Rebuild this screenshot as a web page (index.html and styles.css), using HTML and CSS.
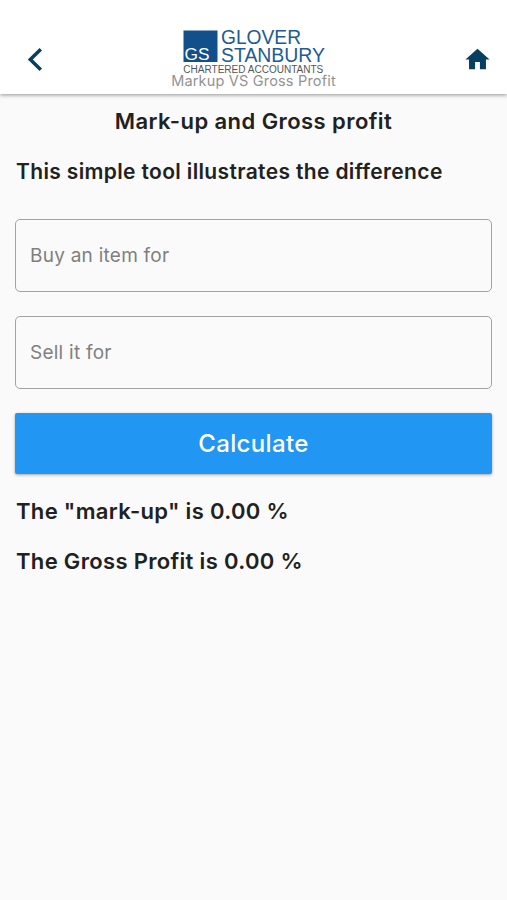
FILE: index.html
```html
<!DOCTYPE html>
<html lang="en">
<head>
<meta charset="utf-8">
<title>Markup VS Gross Profit</title>
<link rel="stylesheet" href="styles.css">
</head>
<body>
<header class="bar">
  <button class="icon back" aria-label="Back"><svg width="20" height="28" viewBox="0 0 20 28"><path d="M15.8 3.2 5.3 13.5 15.8 23.8" fill="none" stroke="#063f61" stroke-width="3.5"/></svg></button>
  <div class="brand">
    <svg class="logo" width="144" height="46" viewBox="0 0 144 46">
      <rect x="1.5" y="2.5" width="34" height="31.5" fill="#12508c"/>
      <text class="gs" x="2.5" y="31.5" textLength="25" lengthAdjust="spacingAndGlyphs">GS</text>
      <text class="name" x="39" y="16" textLength="80" lengthAdjust="spacingAndGlyphs">GLOVER</text>
      <text class="name" x="39" y="34" textLength="104" lengthAdjust="spacingAndGlyphs">STANBURY</text>
      <text class="tag" x="1.3" y="44.8" textLength="140" lengthAdjust="spacingAndGlyphs">CHARTERED ACCOUNTANTS</text>
    </svg>
    <div class="subtitle">Markup VS Gross Profit</div>
  </div>
  <button class="icon home" aria-label="Home"><svg width="29" height="29" viewBox="0 0 24 24"><path d="M10 20v-6h4v6h5v-8h3L12 3 2 12h3v8z" fill="#063f61"/></svg></button>
</header>
<main class="content">
  <h1 class="title">Mark-up and Gross profit</h1>
  <p class="line intro">This simple tool illustrates the difference</p>
  <input class="field" placeholder="Buy an item for">
  <input class="field" placeholder="Sell it for">
  <button class="calculate">Calculate</button>
  <p class="line markup">The "mark-up" is 0.00 %</p>
  <p class="line profit">The Gross Profit is 0.00 %</p>
</main>
</body>
</html>
```
FILE: styles.css
```css
* { box-sizing: border-box; }
body {
  margin: 0;
  min-height: 900px;
  background: #fafafa;
  color: #212121;
  font-family: Inter, "Liberation Sans", sans-serif;
}
button { border: 0; padding: 0; font-family: inherit; }
.bar {
  height: 94px;
  padding: 28px 15px 0 25px;
  display: grid;
  grid-template-columns: 60px 1fr 60px;
  background: #fff;
  box-shadow: 0 1px 4px rgba(0, 0, 0, .42);
}
.icon { display: flex; align-items: center; height: 63px; background: none; }
.home { justify-content: flex-end; }
.brand { display: flex; flex-direction: column; align-items: center; margin-right: 10px; }
.logo { display: block; flex: none; overflow: visible; }
.gs, .name, .tag { font-family: "Liberation Sans", Arial, sans-serif; }
.gs { font-size: 17px; fill: #fff; }
.name { font-size: 20px; fill: #215b96; }
.tag { font-size: 10px; fill: #555; }
.subtitle { font-size: 14.5px; line-height: 16px; margin-top: -1px; letter-spacing: .18px; color: #929292; white-space: nowrap; }
.content { padding: 13px 15px 0; display: flex; flex-direction: column; }
.title, .line { margin: 0; font-size: 22px; line-height: 28px; font-weight: 600; letter-spacing: .33px; white-space: nowrap; }
.title { text-align: center; letter-spacing: .43px; }
.line { padding-left: 1px; }
.intro { margin: 23px 0 33px; font-size: 21px; letter-spacing: .35px; }
.field {
  width: 100%;
  height: 73px;
  margin: 0 0 24px;
  padding: 0 14px;
  border: 1px solid #a3a3a3;
  border-radius: 5px;
  background: transparent;
  font: 400 19px Inter, sans-serif;
  letter-spacing: .25px;
}
.field::placeholder { color: #808080; opacity: 1; }
.calculate {
  height: 61px;
  border-radius: 2px;
  background: #2196f3;
  color: #fff;
  font-size: 24px;
  font-weight: 500;
  letter-spacing: .35px;
  box-shadow: 0 1px 3px rgba(0, 0, 0, .35);
}
.markup { margin-top: 23px; }
.profit { margin-top: 22px; }
```
